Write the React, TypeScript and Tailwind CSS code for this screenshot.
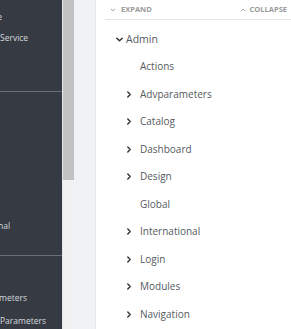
import React from "react";

const Down = ({ className = "" }: { className?: string }) => (
  <svg viewBox="0 0 10 10" className={className} fill="none" stroke="currentColor" strokeWidth="1.6" strokeLinecap="round" strokeLinejoin="round">
    <path d="M2 3.5 L5 6.5 L8 3.5" />
  </svg>
);
const Up = ({ className = "" }: { className?: string }) => (
  <svg viewBox="0 0 10 10" className={className} fill="none" stroke="currentColor" strokeWidth="1.6" strokeLinecap="round" strokeLinejoin="round">
    <path d="M2 6.5 L5 3.5 L8 6.5" />
  </svg>
);
const Right = ({ className = "" }: { className?: string }) => (
  <svg viewBox="0 0 10 10" className={className} fill="none" stroke="currentColor" strokeWidth="1.8" strokeLinecap="round" strokeLinejoin="round">
    <path d="M3.5 2 L6.5 5 L3.5 8" />
  </svg>
);

const items: { label: string; arrow: boolean }[] = [
  { label: "Actions", arrow: false },
  { label: "Advparameters", arrow: true },
  { label: "Catalog", arrow: true },
  { label: "Dashboard", arrow: true },
  { label: "Design", arrow: true },
  { label: "Global", arrow: false },
  { label: "International", arrow: true },
  { label: "Login", arrow: true },
  { label: "Modules", arrow: true },
  { label: "Navigation", arrow: true },
];

export default function App() {
  return (
    <div className="flex w-[291px] h-[329px] overflow-hidden bg-white" style={{ fontFamily: '"Open Sans", sans-serif' }}>
      {/* sidebar */}
      <div className="w-[62px] shrink-0 bg-[#363b43] text-[#d5d8dc] text-[8.5px] overflow-hidden">
        <div className="h-[28px] flex items-end whitespace-nowrap">
          <span className="ml-[-28px] leading-[14px] mb-[4px]">Module</span>
        </div>
        <div className="h-[20px] whitespace-nowrap leading-[20px]">Service</div>
        <div className="h-[43px]" />
        <div className="h-px bg-[#6b7077]" />
        <div className="h-[124px]" />
        <div className="h-[20px] whitespace-nowrap leading-[20px] ml-[-41px]">International</div>
        <div className="h-[19px]" />
        <div className="h-px bg-[#6b7077]" />
        <div className="h-[32px]" />
        <div className="h-[20px] whitespace-nowrap leading-[20px] ml-[-19px]">Parameters</div>
        <div className="h-[3px]" />
        <div className="h-[20px] whitespace-nowrap leading-[20px]">Parameters</div>
      </div>
      <div className="w-px shrink-0 bg-[#e6e7e9]" />
      {/* scrollbar */}
      <div className="w-[11px] shrink-0 bg-[#f1f1f1] flex flex-col">
        <div className="h-[180px] bg-[#c2c2c2]" />
      </div>
      {/* gutter */}
      <div className="w-[22px] shrink-0 bg-[#f1f2f4] border-r border-[#e6e7e9]" />
      {/* main */}
      <div className="flex-1 bg-white pl-[9px] overflow-hidden">
        <div className="flex items-center justify-between h-[20px] border-b border-[#e5e5e5] text-[7.5px] font-bold text-[#9a9a9a]">
          <div className="flex items-center gap-[5px] pl-[5px]">
            <Down className="w-[6px] h-[6px]" />
            <span>EXPAND</span>
          </div>
          <div className="flex items-center gap-[4px] pr-[4px]">
            <Up className="w-[6px] h-[6px]" />
            <span>COLLAPSE</span>
          </div>
        </div>
        <div className="text-[10px] text-[#555a60]">
          <div className="flex items-center h-[27px] mt-[6px] pl-[10px]">
            <Down className="w-[9px] h-[9px] text-[#333]" />
            <span className="ml-[2px] text-[10.5px]">Admin</span>
          </div>
          {items.map((it) => (
            <div key={it.label} className="flex items-center h-[27.5px] pl-[20px]">
              <span className="w-[15px] flex items-center">
                {it.arrow && <Right className="w-[8px] h-[9px] text-[#333]" />}
              </span>
              <span>{it.label}</span>
            </div>
          ))}
        </div>
      </div>
    </div>
  );
}
